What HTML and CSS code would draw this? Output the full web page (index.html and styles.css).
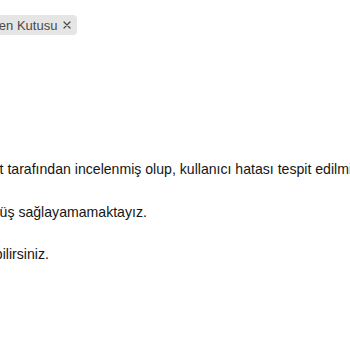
FILE: index.html
```html
<!DOCTYPE html>
<html lang="tr">
<head>
<meta charset="utf-8">
<title>Talep Sonucu</title>
<link rel="stylesheet" href="styles.css">
</head>
<body>
<main class="mail">
  <header class="mail-head">
    <h2 class="subject">Talep Sonucu</h2>
    <span class="chip">Gelen Kutusu<button class="chip-x" aria-label="Kaldır"><svg width="8" height="8" viewBox="0 0 8 8"><path d="M1 1L7 7M7 1L1 7" stroke="#4a4a4a" stroke-width="1.3" stroke-linecap="round"/></svg></button></span>
  </header>
  <section class="mail-body">
    <p>Şikayetiniz uzman heyet tarafından incelenmiş olup, kullanıcı hatası tespit edilmiştir.</p>
    <p>Bu nedenle, olumlu dönüş sağlayamamaktayız.</p>
    <p>Dilerseniz, tekrar ulaşabilirsiniz.</p>
  </section>
</main>
</body>
</html>
```

FILE: styles.css
```css
html, body {
  margin: 0;
  padding: 0;
  background: #ffffff;
  overflow: hidden;
}

body {
  font-family: "Liberation Sans", Arial, sans-serif;
  color: #151515;
}

.mail {
  margin-left: -148.5px;
  width: 700px;
}

.mail-head {
  display: flex;
  align-items: center;
  gap: 12px;
  padding-top: 15px;
  height: 20px;
}

.subject {
  margin: 0;
  font-size: 18px;
  font-weight: normal;
  color: #222222;
  white-space: nowrap;
}

.chip {
  display: inline-flex;
  align-items: center;
  height: 20px;
  padding: 0 6px;
  border-radius: 4px;
  background: #e5e5e5;
  color: #4a4a4a;
  font-size: 13px;
  white-space: nowrap;
}

.chip-x {
  display: inline-flex;
  align-items: center;
  justify-content: center;
  margin-left: 6px;
  padding: 0;
  border: 0;
  background: none;
  width: 8px;
  height: 8px;
}

.mail-body {
  margin-top: 120px;
}

.mail-body p {
  margin: 0 0 14.5px;
  font-size: 14.1px;
  line-height: 28px;
  white-space: nowrap;
}
```
